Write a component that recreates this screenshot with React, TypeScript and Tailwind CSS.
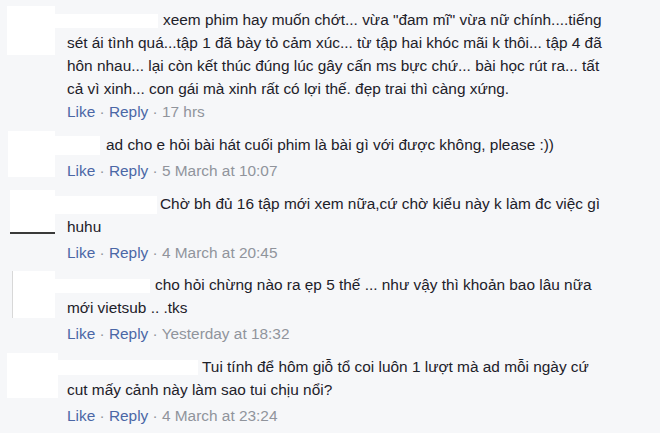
const comments = [
  {
    wrap: "pt-[6px]",
    avatar: "h-[49px] w-[48px] bg-white",
    name: "w-[103px] h-[14px] mr-[5px]",
    lines: [
      'xeem phim hay muốn chớt... vừa "đam mĩ" vừa nữ chính....tiếng',
      "sét ái tình quá...tập 1 đã bày tỏ cảm xúc... từ tập hai khóc mãi k thôi... tập 4 đã",
      "hôn nhau... lại còn kết thúc đúng lúc gây cấn ms bực chứ... bài học rút ra... tất",
      "cả vì xinh... con gái mà xinh rất có lợi thế. đẹp trai thì càng xứng.",
    ],
    time: "17 hrs",
    like: "mt-0",
  },
  {
    wrap: "pt-[8px]",
    avatar: "h-[46px] w-[47px] bg-white ml-px",
    name: "w-[45px] h-[19px] mr-[6px]",
    lines: ["ad cho e hỏi bài hát cuối phim là bài gì với được không, please :))"],
    time: "5 March at 10:07",
    like: "mt-[3px]",
  },
  {
    wrap: "pt-[8px]",
    avatar: "h-[44px] w-[45px] bg-white ml-[3px] border-b-2 border-b-[#3a3a3a]",
    name: "w-[102px] h-[18px] mr-[3px]",
    lines: ["Chờ bh đủ 16 tập mới xem nữa,cứ chờ kiểu này k làm đc việc gì", "huhu"],
    time: "4 March at 20:45",
    like: "mt-[3px]",
  },
  {
    wrap: "pt-[7px]",
    avatar: "h-[47px] w-[43px] bg-white ml-[5px] border-l border-l-[#d8d8d8]",
    name: "w-[95px] h-[14px] mr-[5px]",
    lines: ["cho hỏi chừng nào ra ẹp 5 thế ... như vậy thì khoản bao lâu nữa", "mới vietsub .. .tks"],
    time: "Yesterday at 18:32",
    like: "mt-[3px]",
  },
  {
    wrap: "pt-[8px]",
    avatar: "h-[45px] w-[51px] bg-white -mr-[3px]",
    name: "w-[143px] h-[15px] mr-[4px]",
    lines: ["Tui tính để hôm giỗ tổ coi luôn 1 lượt mà ad mỗi ngày cứ", "cut mấy cảnh này làm sao tui chịu nổi?"],
    time: "4 March at 23:24",
    like: "mt-[3px]",
  },
];

export default function App() {
  return (
    <div
      className="h-[433px] w-[660px] overflow-hidden bg-[#f6f7f9] text-[15.4px] leading-[23px] text-[#1d2129]"
      style={{ fontFamily: '"Liberation Sans", Arial, sans-serif' }}
    >
      {comments.map((c, i) => (
        <div key={i} className={`flex pl-[7px] ${c.wrap}`}>
          <div className={`shrink-0 ${c.avatar}`} />
          <div className="pl-3 pt-[2px]">
            {c.lines.map((line, j) => (
              <div key={j} className="whitespace-nowrap">
                {j === 0 && (
                  <span className={`-ml-3 inline-block bg-white align-middle ${c.name}`} />
                )}
                {line}
              </div>
            ))}
            <div className={`whitespace-nowrap ${c.like}`}>
              <span className="text-[#4b67a6]">Like</span>
              <span className="text-[#90949c]"> · </span>
              <span className="text-[#4b67a6]">Reply</span>
              <span className="text-[#90949c]"> · {c.time}</span>
            </div>
          </div>
        </div>
      ))}
    </div>
  );
}
